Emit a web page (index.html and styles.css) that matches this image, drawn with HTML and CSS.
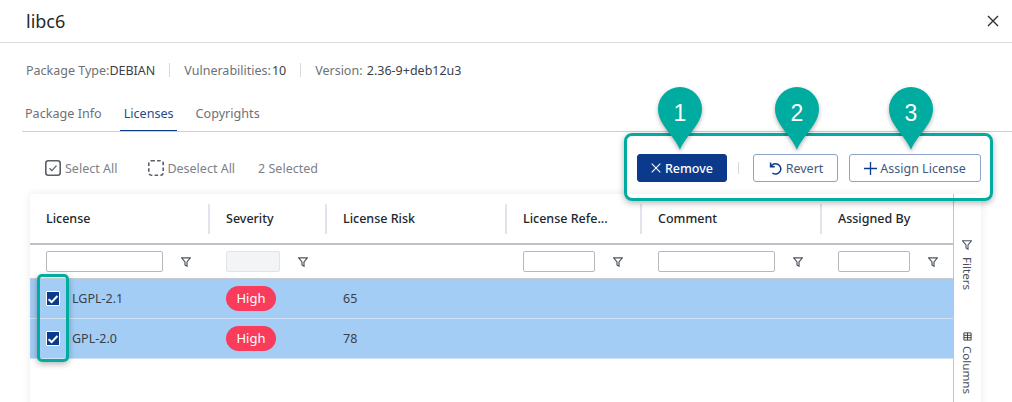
FILE: index.html
```html
<!DOCTYPE html>
<html lang="en">
<head>
<meta charset="utf-8">
<title>libc6</title>
<link rel="stylesheet" href="styles.css">
</head>
<body>
<div class="dialog">
  <header class="title-bar">
    <h1 class="title">libc6</h1>
    <svg class="close" viewBox="0 0 12 12" width="12" height="12"><path d="M1 1l10 10M11 1L1 11" /></svg>
  </header>
  <div class="meta">
    <span class="meta-item">Package Type:<b>DEBIAN</b></span>
    <i class="meta-sep"></i>
    <span class="meta-item">Vulnerabilities:<b class="nudge">10</b></span>
    <i class="meta-sep"></i>
    <span class="meta-item">Version: <b class="nudge">2.36-9+deb12u3</b></span>
  </div>
  <nav class="tabs">
    <span class="tab">Package Info</span>
    <span class="tab tab-active">Licenses</span>
    <span class="tab">Copyrights</span>
  </nav>
  <div class="toolbar">
    <div class="selection">
      <span class="sel-item">
        <svg viewBox="0 0 16 16" width="16" height="16"><rect x="0.8" y="0.8" width="14.4" height="14.4" rx="2.5" fill="none" stroke="#5a5f67" stroke-width="1.6"/><path d="M4.5 8.2l2.4 2.4 4.6-5" fill="none" stroke="#5a5f67" stroke-width="1.3"/></svg>
        Select All
      </span>
      <span class="sel-item sel-deselect">
        <svg viewBox="0 0 16 16" width="16" height="16"><rect x="0.8" y="0.8" width="14.4" height="14.4" rx="2.5" fill="none" stroke="#5a5f67" stroke-width="1.6" stroke-dasharray="3.6 2.2"/></svg>
        Deselect All
      </span>
      <span class="sel-count">2 Selected</span>
    </div>
    <div class="actions">
      <button class="btn btn-primary"><svg viewBox="0 0 10 10" width="10" height="10"><path d="M0.7 0.7l8.6 8.6M9.3 0.7L0.7 9.3" fill="none" stroke="#fff" stroke-width="1.1"/></svg>Remove</button>
      <i class="action-sep"></i>
      <button class="btn btn-outline btn-revert"><svg viewBox="0 0 14 14" width="14" height="14"><path d="M2.6 1.6v4.2h4.2M2.8 5.8A5.2 5.2 0 1 1 4.4 12" fill="none" stroke="#0b3a8c" stroke-width="1.5"/></svg>Revert</button>
      <button class="btn btn-outline btn-assign"><svg viewBox="0 0 13 13" width="13" height="13"><path d="M6.5 0v13M0 6.5h13" fill="none" stroke="#0b3a8c" stroke-width="1.3"/></svg>Assign License</button>
    </div>
  </div>
  <section class="grid-card">
    <div class="grid-main">
      <div class="grid-row head-row">
        <div class="cell head-cell">License</div>
        <div class="cell head-cell">Severity</div>
        <div class="cell head-cell">License Risk</div>
        <div class="cell head-cell">License Refe...</div>
        <div class="cell head-cell">Comment</div>
        <div class="cell head-cell last">Assigned By</div>
      </div>
      <div class="grid-row filter-row">
        <div class="cell"><input class="filter-input wide"><svg class="funnel" viewBox="0 0 10 10"><path d="M0.6 0.8h8.8L6 4.9v4.3L4 7.9v-3z"/></svg></div>
        <div class="cell"><input class="filter-input small" disabled><svg class="funnel" viewBox="0 0 10 10"><path d="M0.6 0.8h8.8L6 4.9v4.3L4 7.9v-3z"/></svg></div>
        <div class="cell"></div>
        <div class="cell"><input class="filter-input mid"><svg class="funnel" viewBox="0 0 10 10"><path d="M0.6 0.8h8.8L6 4.9v4.3L4 7.9v-3z"/></svg></div>
        <div class="cell"><input class="filter-input wide"><svg class="funnel" viewBox="0 0 10 10"><path d="M0.6 0.8h8.8L6 4.9v4.3L4 7.9v-3z"/></svg></div>
        <div class="cell"><input class="filter-input mid"><svg class="funnel" viewBox="0 0 10 10"><path d="M0.6 0.8h8.8L6 4.9v4.3L4 7.9v-3z"/></svg></div>
      </div>
      <div class="grid-row data-row">
        <div class="cell check-cell"><span class="check"><svg viewBox="0 0 12 12" width="12" height="12"><path d="M1.6 6.3l3 2.8L10.4 3" fill="none" stroke="#fff" stroke-width="2"/></svg></span>LGPL-2.1</div>
        <div class="cell"><span class="pill">High</span></div>
        <div class="cell">65</div>
        <div class="cell"></div><div class="cell"></div><div class="cell"></div>
      </div>
      <div class="grid-row data-row">
        <div class="cell check-cell"><span class="check"><svg viewBox="0 0 12 12" width="12" height="12"><path d="M1.6 6.3l3 2.8L10.4 3" fill="none" stroke="#fff" stroke-width="2"/></svg></span>GPL-2.0</div>
        <div class="cell"><span class="pill">High</span></div>
        <div class="cell">78</div>
        <div class="cell"></div><div class="cell"></div><div class="cell"></div>
      </div>
    </div>
    <aside class="side">
      <div class="side-btn filters">
        <svg viewBox="0 0 10 10" width="10" height="10"><path d="M0.6 0.8h8.8L6 4.9v4.3L4 7.9v-3z" fill="none" stroke="#4e5660" stroke-width="1.1"/></svg>
        <span class="side-text">Filters</span>
      </div>
      <div class="side-btn columns">
        <svg viewBox="0 0 10 10" width="9" height="9"><path d="M1 1h8v8H1zM1 3.7h8M1 6.3h8M5 1v8" fill="none" stroke="#333" stroke-width="1"/></svg>
        <span class="side-text">Columns</span>
      </div>
    </aside>
  </section>
</div>

<div class="mark mark-actions"></div>
<div class="mark mark-checks"></div>
<svg class="pin pin-1" viewBox="0 0 44 64" width="44" height="64"><path d="M22 63C17 49 0 38 0 22a22 22 0 0 1 44 0C44 38 27 49 22 63z"/></svg><span class="pin-num num-1">1</span>
<svg class="pin pin-2" viewBox="0 0 44 64" width="44" height="64"><path d="M22 63C17 49 0 38 0 22a22 22 0 0 1 44 0C44 38 27 49 22 63z"/></svg><span class="pin-num num-2">2</span>
<svg class="pin pin-3" viewBox="0 0 44 64" width="44" height="64"><path d="M22 63C17 49 0 38 0 22a22 22 0 0 1 44 0C44 38 27 49 22 63z"/></svg><span class="pin-num num-3">3</span>
</body>
</html>
```
FILE: styles.css
```css
* { box-sizing: border-box; }
html, body { margin: 0; height: 402px; overflow: hidden; background: #fff; }
body { font-family: "Noto Sans", sans-serif; font-size: 12.5px; color: #3c4048; position: relative; }
.dialog { width: 1012px; height: 402px; overflow: hidden; }

.title-bar { height: 43px; border-bottom: 1px solid #dcdcdc; display: flex; align-items: center; justify-content: space-between; padding: 0 13px 0 26px; }
.title { margin: 0; font-size: 18px; font-weight: 400; color: #25282d; line-height: 24px; }
.close { fill: none; stroke: #2b2f36; stroke-width: 1.4; }

.meta { height: 54px; padding: 0 0 0 26px; display: flex; align-items: center; color: #6d7178; font-size: 12.5px; }
.meta b { font-weight: 400; color: #3b3f46; }
.meta b.nudge { margin-left: 1px; }
.meta-sep { width: 1px; height: 14px; background: #d6d8db; margin: 0 14px; }

.tabs { height: 35px; margin: 0 0 0 22px; display: flex; border-bottom: 1px solid #cdcfd3; align-items: flex-start; }
.tab { padding: 8px 0 0 3px; margin-right: 18px; color: #6d7178; font-size: 12.6px; line-height: 17px; }
.tab-active { color: #1f4a8c; padding: 8px 3px 0 4px; border-bottom: 1px solid #0b3a8c; height: 34px; margin-right: 16px; }

.toolbar { height: 62px; display: flex; align-items: center; justify-content: space-between; padding: 10px 31px 0 45px; }
.selection { display: flex; align-items: center; color: #7d8187; }
.sel-item { display: flex; align-items: center; gap: 4px; margin-right: 31px; }
.sel-deselect { gap: 3px; margin-right: 23px; }
.sel-count { color: #7d8187; }
.actions { display: flex; align-items: center; }
.btn { height: 28px; border-radius: 3px; font-family: inherit; font-size: 12.5px; display: flex; align-items: center; justify-content: center; padding: 0; }
.btn-primary { width: 90px; background: #0b3a8c; border: 1px solid #0b3a8c; color: #fff; font-weight: 500; gap: 4px; }
.action-sep { width: 1px; height: 12px; background: #d6d8db; margin: 0 14px 0 11px; }
.btn-outline { background: #fff; border: 1px solid #8ea3c9; color: #43597f; }
.btn-revert { width: 85px; gap: 4px; margin-right: 11px; }
.btn-assign { width: 132px; gap: 3px; }

.grid-card { margin-left: 30px; width: 951px; height: 220px; display: flex; background: #fff; box-shadow: 0 0 10px rgba(0,0,0,.09); border-radius: 4px 4px 0 0; }
.grid-main { width: 923px; }
.grid-row { display: grid; grid-template-columns: 180px 117px 180px 135px 180px 131px; }
.head-row { height: 51px; border-bottom: 2px solid #bfc3c9; align-items: center; }
.cell { padding-left: 16px; display: flex; align-items: center; min-width: 0; position: relative; }
.head-cell { height: 30px; border-right: 2px solid #e1e4ec; font-weight: 500; color: #22262c; }
.head-cell.last { border-right: 0; }
.filter-row { height: 34px; border-bottom: 1px solid #c8cbd0; }
.filter-input { height: 21px; border: 1px solid #b6b8bc; border-radius: 2px; background: #fff; padding: 0; margin: 0; flex: none; }
.filter-input.wide { width: 117px; }
.filter-input.mid { width: 72px; }
.filter-input.small { width: 54px; background: #f3f4f5; border-color: #e2e3e5; }
.funnel { width: 10px; height: 10px; margin-left: 18px; fill: none; stroke: #4e5660; stroke-width: 1.2; flex: none; }
.data-row { height: 40px; background: #a3cdf5; border-bottom: 1px solid #cfe2f7; color: #3c4048; }
.check-cell { gap: 12px; }
.check { width: 14px; height: 15px; background: #0b3a8c; border: 1px solid #fff; border-radius: 1px; display: flex; align-items: center; justify-content: center; }
.pill { height: 25px; width: 50px; border-radius: 13px; background: #f93c5b; color: #fff; font-size: 13px; display: flex; align-items: center; justify-content: center; margin-top: -1px; }

.side { width: 28px; border-left: 1px solid #c0c3c8; padding: 46px 0 0 0; display: flex; flex-direction: column; align-items: center; gap: 42px; color: #4b4f56; }
.side-btn { display: flex; flex-direction: column; align-items: center; gap: 7px; font-size: 11.6px; margin-right: 1px; }
.columns { gap: 5px; }
.side-text { writing-mode: vertical-rl; line-height: 14px; }

.mark { position: absolute; border: 3px solid #00ab9f; border-radius: 8px; box-shadow: 0 2px 6px rgba(0,0,0,.3); }
.mark-actions { left: 624px; top: 133px; width: 369px; height: 68px; }
.mark-checks { left: 37px; top: 274px; width: 32px; height: 88px; border-radius: 5px; }
.pin { position: absolute; top: 87px; fill: #00ab9f; filter: drop-shadow(0 2px 2px rgba(0,0,0,.3)); }
.pin-1 { left: 658px; }
.pin-2 { left: 775px; }
.pin-3 { left: 889px; }
.pin-num { position: absolute; top: 99px; width: 44px; text-align: center; font-family: "Liberation Sans", sans-serif; font-size: 23px; line-height: 28px; color: #fff; }
.num-1 { left: 658px; }
.num-2 { left: 775px; }
.num-3 { left: 889px; }
```
